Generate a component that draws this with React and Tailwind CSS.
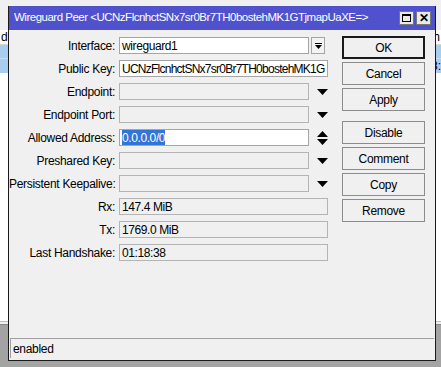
const font = { fontFamily: '"Liberation Sans", Arial, sans-serif' }

function Field({ children, className = '', white }) {
  return (
    <div className={`h-[17px] border flex items-center px-[2px] text-[12px] tracking-[-0.4px] text-black overflow-hidden whitespace-nowrap ${white ? 'bg-white border-[#a5a5a5]' : 'bg-[#f0f0f0] border-[#b4b4b4]'} ${className}`}>
      {children}
    </div>
  )
}

function Down() {
  return (
    <svg width="11" height="6" viewBox="0 0 11 6"><path d="M0 0h11L5.5 6z" fill="#000" /></svg>
  )
}

function UpDown() {
  return (
    <svg width="11" height="14" viewBox="0 0 11 14"><path d="M0 6h11L5.5 0z M0 8h11L5.5 14z" fill="#000" /></svg>
  )
}

function Row({ label, children }) {
  return (
    <div className="flex items-center h-[17px]">
      <div className="w-[110px] text-right pr-[4px] text-[12px] tracking-[-0.3px] text-black whitespace-nowrap">{label}</div>
      {children}
    </div>
  )
}

function Btn({ children, def }) {
  return (
    <div className={`w-[83px] h-[23px] flex items-center justify-center text-[12px] tracking-[-0.3px] text-black bg-[#f0f0f0] ${def ? 'border-2 border-[#1a1a1a]' : 'border border-[#8c8c8c]'}`}>
      {children}
    </div>
  )
}

export default function App() {
  return (
    <div className="relative w-[441px] h-[367px] overflow-hidden bg-white" style={font}>
      {/* background window behind the dialog */}
      <div className="flex flex-col h-full">
        <div className="h-[30px] bg-[#f0f0f0]" />
        <div className="h-[15px] border-b border-[#d8d8d8] text-[12px] text-black flex items-center justify-between">
          <span className="pl-[1px]">dr</span><span className="pr-[1px]">h</span>
        </div>
        <div className="h-[14px] bg-[#a9cdee] border-b border-[#c8ddf2]" />
        <div className="h-[14px] bg-[#a9cdee] text-[12px] flex items-center justify-end">8:</div>
        <div className="flex-1" />
        <div className="h-[4px] bg-[#f0f0f0] border-t border-[#bdbdbd] border-b border-b-[#888]" />
        <div className="h-[42px] bg-[#a3a3a3]" />
      </div>

      {/* dialog */}
      <div className="absolute left-[8px] top-[6px] w-[428px] h-[355px] bg-[#f0f0f0] border border-[#1a1a1a] border-t-0 flex flex-col">
        <div className="h-[24px] bg-[#4f52cc] flex items-center justify-between pl-[5px] pr-[4px]">
          <span className="text-white text-[11.5px] tracking-[-0.5px] whitespace-nowrap">Wireguard Peer &lt;UCNzFlcnhctSNx7sr0Br7TH0bostehMK1GTjmapUaXE=&gt;</span>
          <div className="flex gap-[2px]">
            <div className="w-[15px] h-[14px] bg-[#e9e9e9] border border-[#777] flex items-center justify-center">
              <div className="w-[9px] h-[8px] border border-black border-t-2" />
            </div>
            <div className="w-[15px] h-[14px] bg-[#e9e9e9] border border-[#777] flex items-center justify-center text-[12px] font-bold leading-none">✕</div>
          </div>
        </div>

        <div className="flex-1 flex pt-[7px]">
          <div className="flex flex-col gap-[6px]">
            <Row label="Interface:">
              <Field white className="w-[190px]">wireguard1</Field>
              <div className="ml-[2px] w-[14px] h-[17px] border border-[#a5a5a5] bg-[#f3f3f3] flex flex-col items-center justify-center">
                <div className="w-[7px] h-[1px] bg-black mb-[1px]" />
                <svg width="7" height="4" viewBox="0 0 7 4"><path d="M0 0h7L3.5 4z" fill="#000" /></svg>
              </div>
            </Row>
            <Row label="Public Key:">
              <Field white className="w-[209px] tracking-[-0.75px]">UCNzFlcnhctSNx7sr0Br7TH0bostehMK1G</Field>
            </Row>
            <Row label="Endpoint:">
              <Field className="w-[190px]" />
              <div className="w-[19px] flex justify-end"><Down /></div>
            </Row>
            <Row label="Endpoint Port:">
              <Field className="w-[190px]" />
              <div className="w-[19px] flex justify-end"><Down /></div>
            </Row>
            <Row label="Allowed Address:">
              <Field white className="w-[190px]">
                <span className="bg-[#3375d6] text-white">0.0.0.0/0</span>
              </Field>
              <div className="w-[19px] flex justify-end"><UpDown /></div>
            </Row>
            <Row label="Preshared Key:">
              <Field className="w-[190px]" />
              <div className="w-[19px] flex justify-end"><Down /></div>
            </Row>
            <Row label="Persistent Keepalive:">
              <Field className="w-[190px]" />
              <div className="w-[19px] flex justify-end"><Down /></div>
            </Row>
            <Row label="Rx:">
              <Field className="w-[209px]">147.4 MiB</Field>
            </Row>
            <Row label="Tx:">
              <Field className="w-[209px]">1769.0 MiB</Field>
            </Row>
            <Row label="Last Handshake:">
              <Field className="w-[209px]">01:18:38</Field>
            </Row>
          </div>

          <div className="ml-[14px] flex flex-col gap-[3px] -mt-[1px]">
            <Btn def>OK</Btn>
            <Btn>Cancel</Btn>
            <Btn>Apply</Btn>
            <div className="h-[4px]" />
            <Btn>Disable</Btn>
            <Btn>Comment</Btn>
            <Btn>Copy</Btn>
            <Btn>Remove</Btn>
          </div>
        </div>

        <div className="mx-[1px] mb-[2px] h-[20px] border-t border-l border-[#a0a0a0] flex items-center px-[2px] text-[12px] tracking-[-0.3px] text-black">
          enabled
        </div>
      </div>
    </div>
  )
}
